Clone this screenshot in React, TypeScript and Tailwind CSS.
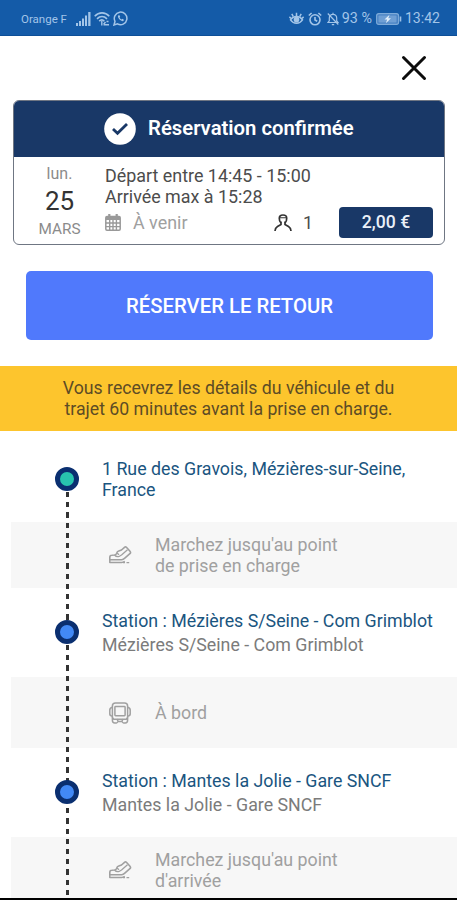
import type { ReactNode } from 'react';

type Stop = {
  title: string;
  address?: string;
  dot: string;
  height: string;
};

function SignalIcon() {
  return (
    <svg width="15" height="14" viewBox="0 0 15 14" fill="currentColor">
      <path d="M0 11h2v3H0zM3 9h2v5H3zM6 6.500h2V14H6zM9 3.500h2V14H9zM12.200 0h2.300v14h-2.300z" />
    </svg>
  );
}

function WifiIcon() {
  return (
    <svg width="16" height="14" viewBox="0 0 16 14" fill="none" stroke="currentColor" strokeWidth="1.600">
      <path d="M.7 4.200C5-.2 11-.2 15.300 4.200M3 6.800c3-2.900 7-2.900 10 0M5.200 9.200c1.600-1.500 3.700-1.500 5.200 0" />
      <path d="M7.800 9v4.500M9.500 12.700h5.500M11.500 10l-2 2.500M12.500 9.500h2" strokeWidth="1.400" />
    </svg>
  );
}

function WhatsappIcon() {
  return (
    <svg width="15" height="15" viewBox="0 0 15 15" fill="none" stroke="currentColor" strokeWidth="1.500">
      <path d="M1 14l1-3.700a6.300 6.300 0 1 1 2.500 2.600z" />
      <path d="M5 4.500c-.6 2.500 2.800 6 5.400 5.600l.5-1.400-1.500-.9-.9.700C7.600 8.100 7 7.400 6.600 6.500l.6-.8-.7-1.500z" fill="currentColor" stroke="none" />
    </svg>
  );
}

function EyeIcon() {
  return (
    <svg width="15" height="13" viewBox="0 0 15 13" fill="none" stroke="currentColor" strokeWidth="1.500">
      <path d="M1.500 7.800c3-4.500 9-4.500 12 0-3 4.500-9 4.500-12 0z" />
      <circle cx="7.500" cy="7.600" r="2.100" fill="currentColor" />
      <path d="M7.500 4V.8M4.300 4.600L2.800 1.800M10.700 4.600l1.500-2.800M2 6.500L.4 4.800M13 6.500l1.600-1.700" />
    </svg>
  );
}

function AlarmIcon() {
  return (
    <svg width="14" height="14" viewBox="0 0 14 14" fill="none" stroke="currentColor" strokeWidth="1.600">
      <circle cx="7" cy="7.800" r="5" />
      <path d="M7 5v3l2.200 1.200M.8 3.500L3.600 1M13.200 3.500L10.400 1" />
    </svg>
  );
}

function MuteIcon() {
  return (
    <svg width="12" height="14" viewBox="0 0 12 14" fill="none" stroke="currentColor" strokeWidth="1.200">
      <path d="M1 10.500h10L9.700 8.800V6c0-2-1.400-3.700-3.700-3.700S2.300 4 2.300 6v2.800zM6 2.300V.8M4.800 12.600h2.400M.8 1.500l10.500 11" />
    </svg>
  );
}

function BatteryIcon() {
  return (
    <svg width="26" height="12" viewBox="0 0 26 12">
      <rect x=".6" y=".6" width="22" height="10.800" rx="2.200" fill="#4a83c4" stroke="#7eabd9" strokeWidth="1.100" />
      <rect x="2.500" y="2.500" width="18" height="7" rx="1" fill="#6f9fd4" />
      <path d="M13.500 1.800L8.500 6.500h2.700L9.800 10.200l5.200-4.900h-2.700z" fill="#e3effa" />
      <path d="M24.500 3.500v5" stroke="#9dc0e4" strokeWidth="1.600" />
    </svg>
  );
}

function CalendarIcon() {
  return (
    <svg width="16" height="17" viewBox="0 0 16 17" fill="none" stroke="currentColor">
      <rect x=".8" y="2.600" width="14.400" height="13.600" rx="1.200" strokeWidth="1.500" />
      <path d="M1 4.600h14" strokeWidth="3" />
      <path d="M4.300 0v4M11.700 0v4" strokeWidth="2.200" />
      <path d="M1 9h14M1 12.600h14M4.700 6v10M8 6v10M11.400 6v10" strokeWidth="1.400" />
    </svg>
  );
}

function PassengerIcon() {
  return (
    <svg width="18" height="18" viewBox="0 0 18 18" fill="none" stroke="#333" strokeWidth="1.700">
      <path d="M6.900 9C5.500 7.700 5.300 5.800 5.300 4.200 5.300 2 6.700 1 9 1s3.700 1 3.700 3.200c0 1.600-.2 3.500-1.600 4.800" />
      <path d="M7 7.500v3L3.500 12.500C2 13.400 1.200 14.500 1 17M11 7.500v3l3.500 2c1.500.9 2.300 2 2.500 4.500" />
      <path d="M6 3.800h6" strokeWidth="1.100" />
    </svg>
  );
}

function ShoeIcon() {
  return (
    <svg width="24" height="20" viewBox="0 0 24 20" fill="none" stroke="#a0a0a0" strokeWidth="1.600" strokeLinejoin="round">
      <path d="M1.800 14.800v-2.500c0-1.300.8-1.900 2-2l2.700-.3c1.300-.2 1.900-.8 2.200-1.900.3-1.200.9-1.700 2-2L13.500 5l3-2.700c.7-.6 1.300-.6 1.900 0L22 6.200c.8.900.7 1.700-.1 2.500l-5.100 4.500c-1 .9-1.800 1.400-3.100 1.500z" />
      <path d="M1.800 14.800v2.700h12c1.200 0 2-.5 2.900-1.300" strokeWidth="1.500" />
      <path d="M6.500 10c1.300 1.500 3 2 4.500 1.500l2.500-1.500 6-5.300M9 8l2 1.800" strokeWidth="1.300" />
      <path d="M15 17.600h2M18.500 17.600h2.700" strokeWidth="1.300" />
    </svg>
  );
}

function BusIcon() {
  return (
    <svg width="22" height="22" viewBox="0 0 22 22" fill="none" stroke="#a0a0a0" strokeWidth="1.500" strokeLinejoin="round">
      <path d="M6.500 1h9C17.300 1 18.600 2.300 18.600 4v11.500l-1.300 1.700H4.700l-1.300-1.700V4C3.400 2.300 4.700 1 6.500 1z" />
      <rect x="5.900" y="4.500" width="10.200" height="9.200" rx=".7" />
      <path d="M3.400 5.200C1.700 5.500.8 6.500.8 8v4c0 1.200.9 2 2.600 2.200M18.600 5.200c1.700.3 2.600 1.300 2.600 2.800v4c0 1.200-.9 2-2.600 2.200" />
      <path d="M3.400 15.500v2.700c0 1.700.8 2.700 2.300 2.700h1.800c.8 0 1.200-.8 1.500-1.400h4c.3.600.7 1.400 1.500 1.400h1.800c1.500 0 2.300-1 2.300-2.700v-2.700M8 17.200l1.200 2.300M14 17.200l-1.200 2.300" />
    </svg>
  );
}

function StopRow({ title, address, dot, height }: Stop) {
  return (
    <div className={`flex pl-[55px] ${height}`}>
      <span className={`relative z-10 h-6 w-6 shrink-0 rounded-full border-[5px] border-[#0a2f70] ${dot}`} />
      <div className="-mt-px ml-[23px] whitespace-pre-line text-[17.8px]">
        <p className="leading-[21px] text-[#1a5580]">{title}</p>
        {address && <p className="mt-[3px] leading-[21px] text-[#7b7b7b]">{address}</p>}
      </div>
    </div>
  );
}

function Leg({ icon, text, height }: { icon: ReactNode; text: string; height: string }) {
  return (
    <div className={`ml-[11px] flex items-center bg-[#f7f7f7] ${height}`}>
      <span className="ml-[97px] flex w-6 justify-center">{icon}</span>
      <p className="ml-[23px] whitespace-pre-line pb-px text-[17.8px] leading-[21px] text-[#a0a0a0]">
        {text}
      </p>
    </div>
  );
}

export default function App() {
  return (
    <div className="flex h-[900px] w-[457px] flex-col overflow-hidden bg-white font-['Roboto',sans-serif]">
      <header className="flex h-9 shrink-0 items-center border-b border-[#0d4f98] bg-[#145ba8] pt-0.5 pr-[17px] pl-[21px] text-[#a3c5e8]">
        <span className="w-[55px] pt-0.5 text-[11.5px]">Orange F</span>
        <SignalIcon />
        <span className="ml-[3px]"><WifiIcon /></span>
        <span className="ml-[3px]"><WhatsappIcon /></span>
        <div className="ml-auto flex items-center">
          <EyeIcon />
          <span className="ml-[4px]"><AlarmIcon /></span>
          <span className="ml-[5px]"><MuteIcon /></span>
          <span className="ml-[3px] pt-px text-[14.3px]">93 %</span>
          <span className="ml-[4px]"><BatteryIcon /></span>
          <span className="ml-[3px] pt-px text-[14.1px]">13:42</span>
        </div>
      </header>

      <div className="flex h-16 shrink-0 justify-end pt-[19px] pr-[30px]">
        <svg width="26" height="26" viewBox="0 0 26 26" stroke="#0c0c0c" strokeWidth="3" strokeLinecap="round">
          <path d="M2.500 2.500l21 21M23.500 2.500l-21 21" />
        </svg>
      </div>

      <section className="mr-3 ml-[13px] h-[145px] shrink-0 overflow-hidden rounded-[6px] border border-[#6f7683]">
        <div className="-mx-px -mt-px flex h-[57px] items-center bg-[#193867] pl-[91px]">
          <svg width="32" height="32" viewBox="0 0 32 32">
            <circle cx="16" cy="16" r="15.800" fill="#fff" />
            <path d="M9 16l4.500 4.300 9.500-9.300" fill="none" stroke="#193867" strokeWidth="2.800" />
          </svg>
          <h1 className="ml-3 text-[20.3px] font-semibold text-white">Réservation confirmée</h1>
        </div>
        <div className="flex">
          <div className="flex w-[91px] flex-col items-center pt-[7px] text-[#8b8b8b]">
            <span className="text-[16px] leading-5">lun.</span>
            <span className="text-[26px] leading-[35px] text-[#333]">25</span>
            <span className="text-[15.3px] leading-5">MARS</span>
          </div>
          <div className="flex-1 pt-2 text-[17.9px] leading-[21px] text-[#4c4c4c]">
            <p>Départ entre 14:45 - 15:00</p>
            <p>Arrivée max à 15:28</p>
            <div className="flex h-[31px] items-center">
              <span className="text-[#999]"><CalendarIcon /></span>
              <span className="ml-3 text-[#a0a0a0]">À venir</span>
              <span className="ml-auto"><PassengerIcon /></span>
              <span className="ml-[11px]">1</span>
              <span className="mr-[11px] ml-[26px] flex h-[31px] w-[94px] items-center justify-center rounded-[4px] bg-[#193867] text-[17.6px] font-medium text-[#eaf0f8]">
                2,00 €
              </span>
            </div>
          </div>
        </div>
      </section>

      <button className="mt-[26px] mr-6 ml-[26px] h-[69px] shrink-0 rounded-[5px] bg-[#5079fc] pt-0.5 text-[20.3px] font-medium text-white">
        RÉSERVER LE RETOUR
      </button>

      <div className="mt-[26px] flex h-[65px] shrink-0 items-center justify-center bg-[#fdc52d] pt-px text-center text-[17.7px] leading-[21px] text-[#5d4c25]">
        <p>
          Vous recevrez les détails du véhicule et du
          <br />
          trajet 60 minutes avant la prise en charge.
        </p>
      </div>

      <main className="relative h-[467px] shrink-0 overflow-hidden pt-7">
        <div className="absolute top-[61px] bottom-0 left-[66px] z-[5] w-[3px] bg-[repeating-linear-gradient(to_bottom,#333_0px,#333_5.200px,transparent_5.200px,transparent_10.200px)]" />
        <StopRow title={'1 Rue des Gravois, Mézières-sur-Seine,\nFrance'} dot="mt-2 bg-[#28c4ae]" height="h-[63px]" />
        <Leg icon={<ShoeIcon />} text={"Marchez jusqu'au point\nde prise en charge"} height="h-[66px]" />
        <div className="h-[23px]" />
        <StopRow
          title="Station : Mézières S/Seine - Com Grimblot"
          address="Mézières S/Seine - Com Grimblot"
          dot="mt-[9px] bg-[#4289f5]"
          height="h-[66px]"
        />
        <Leg icon={<BusIcon />} text="À bord" height="h-[71px]" />
        <div className="h-[23px]" />
        <StopRow
          title="Station : Mantes la Jolie - Gare SNCF"
          address="Mantes la Jolie - Gare SNCF"
          dot="mt-[9px] bg-[#4289f5]"
          height="h-[66px]"
        />
        <Leg icon={<ShoeIcon />} text={"Marchez jusqu'au point\nd'arrivée"} height="h-[66px]" />
      </main>
      <div className="h-[2px] shrink-0 bg-black" />
    </div>
  );
}
